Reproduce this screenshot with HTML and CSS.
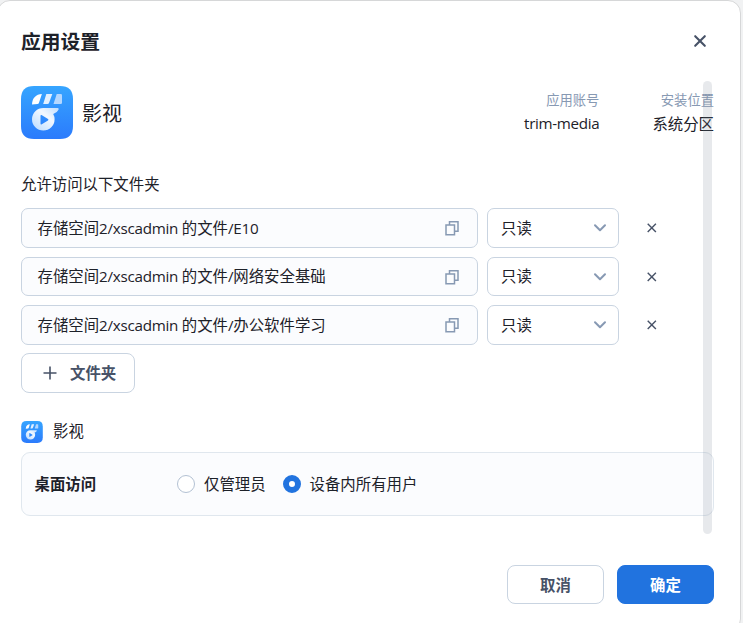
FILE: index.html
```html
<!DOCTYPE html>
<html lang="zh-CN">
<head>
<meta charset="utf-8">
<title>应用设置</title>
<link rel="stylesheet" href="styles.css">
</head>
<body>
<svg class="defs" width="0" height="0" aria-hidden="true">
  <defs>
    <linearGradient id="tile" x1="0" y1="0" x2="0" y2="1"><stop offset="0" stop-color="#36a5ff"/><stop offset="1" stop-color="#2b7bfc"/></linearGradient>
    <linearGradient id="disc" x1="1" y1="0" x2="0" y2="1"><stop offset="0" stop-color="#c0deff"/><stop offset=".4" stop-color="#f2f8ff"/><stop offset="1" stop-color="#b9daff"/></linearGradient>
    <symbol id="app" viewBox="0 0 52 53">
      <path fill="url(#tile)" d="M13 0H39Q52 0 52 13V40Q52 53 39 53H13Q0 53 0 40V13Q0 0 13 0Z"/>
      <path fill="#fff" d="M11 18.4C11.3 12 15 8.3 20.9 8L18 16.8Q17.6 18 16.5 18Z"/>
      <path fill="#e2f0ff" d="M25.3 8H31.3L28 17Q27.6 18 26.5 18H22.2Z"/>
      <path fill="#b4d7ff" d="M35.7 8H39.7Q41 8 41 9.3V16.7Q41 18 39.7 18H32.5Z"/>
      <path fill="url(#disc)" fill-rule="evenodd" d="M22.3 22H36.7Q38.3 22.2 37.5 23.8Q36 27 32.2 28Q33.6 30.5 33.6 33.3A11.3 11.3 0 1 1 22.3 22ZM20.5 29Q19.5 28.5 19.5 30V37.4Q19.5 38.9 20.8 38.2L27 34.4Q27.9 33.6 27 32.9Z"/>
    </symbol>
    <symbol id="copy" viewBox="0 0 15 16"><path fill="none" stroke="#8799b3" stroke-width="1.5" d="M1 5H9.5V14.8H1ZM4.5 5V1.7H13V11.3H9.5"/></symbol>
    <symbol id="chev" viewBox="0 0 14 10"><path fill="none" stroke="#8799b3" stroke-width="2" stroke-linecap="round" stroke-linejoin="round" d="M2 2.3 7 7.2 12 2.3"/></symbol>
    <symbol id="cross" viewBox="0 0 12 12"><path fill="none" stroke="#475267" stroke-width="1.4" stroke-linecap="square" d="M2.2 2.2 9.4 9.4M9.4 2.2 2.2 9.4"/></symbol>
  </defs>
</svg>
<main class="dialog">
  <header class="head">
    <h1>应用设置</h1>
    <button class="close" aria-label="关闭"><svg width="14" height="14" viewBox="0 0 14 14"><path fill="none" stroke="#475267" stroke-width="2.1" stroke-linecap="round" d="M2.2 2.2 11.8 11.8M11.8 2.2 2.2 11.8"/></svg></button>
  </header>
  <div class="body">
    <section class="app">
      <svg class="logo"><use href="#app"/></svg>
      <span class="name">影视</span>
      <dl class="meta">
        <div><dt>应用账号</dt><dd class="latin">trim-media</dd></div>
        <div><dt>安装位置</dt><dd>系统分区</dd></div>
      </dl>
    </section>
    <p class="caption">允许访问以下文件夹</p>
    <div class="rows">
      <div class="row">
        <div class="field"><span>存储空间<span class="lat">2/xscadmin </span>的文件<span class="lat">/E10</span></span><svg class="copy"><use href="#copy"/></svg></div>
        <div class="select"><span>只读</span><svg class="chev"><use href="#chev"/></svg></div>
        <svg class="remove"><use href="#cross"/></svg>
      </div>
      <div class="row short">
        <div class="field"><span>存储空间<span class="lat">2/xscadmin </span>的文件<span class="lat">/</span>网络安全基础</span><svg class="copy"><use href="#copy"/></svg></div>
        <div class="select"><span>只读</span><svg class="chev"><use href="#chev"/></svg></div>
        <svg class="remove"><use href="#cross"/></svg>
      </div>
      <div class="row">
        <div class="field"><span>存储空间<span class="lat">2/xscadmin </span>的文件<span class="lat">/</span>办公软件学习</span><svg class="copy"><use href="#copy"/></svg></div>
        <div class="select"><span>只读</span><svg class="chev"><use href="#chev"/></svg></div>
        <svg class="remove"><use href="#cross"/></svg>
      </div>
    </div>
    <button class="add"><svg width="14" height="14" viewBox="0 0 14 14"><path fill="none" stroke="#475267" stroke-width="1.6" d="M7 .5V13.5M.5 7H13.5"/></svg><span>文件夹</span></button>
    <div class="subhead"><svg class="logo-small"><use href="#app"/></svg><span>影视</span></div>
    <section class="card">
      <strong>桌面访问</strong>
      <span class="option"><i class="radio"></i><span>仅管理员</span></span>
      <span class="option"><i class="radio on"></i><span>设备内所有用户</span></span>
    </section>
    <div class="scrollbar"></div>
  </div>
  <footer class="foot">
    <button class="btn">取消</button>
    <button class="btn primary">确定</button>
  </footer>
</main>
</body>
</html>
```
FILE: styles.css
```css
* { box-sizing: border-box; }
body {
  margin: 0;
  height: 623px;
  overflow: hidden;
  background: #f1f2f3;
  color: #1d2129;
  font: 15.4px/22px "Noto Sans CJK SC", sans-serif;
}
h1, p, dl, dd { margin: 0; }
button { font: inherit; padding: 0; }
svg { display: block; flex: none; }
.defs { position: absolute; }
.dialog {
  width: 744px;
  height: 632px;
  margin-left: -3px;
  padding: 0 26px 0 23px;
  background: #fff;
  border: 1px solid #d6d7d8;
  border-radius: 13px;
}
.head {
  display: flex;
  align-items: center;
  justify-content: space-between;
  height: 80px;
}
h1 { font-size: 19.8px; line-height: 28px; font-weight: 700; }
.close { border: 0; background: none; margin: 0 7px 1px 0; }
.body { position: relative; height: 453px; }
.scrollbar {
  position: absolute;
  top: 0;
  right: 2px;
  width: 9px;
  height: 453px;
  border-radius: 5px;
  background: rgba(120, 135, 150, .18);
}
.app { display: flex; align-items: center; padding-top: 5px; height: 58px; }
.logo { width: 52px; height: 53px; }
.name { margin-left: 9px; font-size: 20px; }
.meta { display: flex; gap: 53px; margin: 0 0 3px auto; text-align: right; }
dt { color: #8799b3; font-size: 13.3px; line-height: 24px; }
dd { line-height: 22px; }
.latin, .lat { font-family: "Open Sans", sans-serif; font-size: 15.2px; letter-spacing: -.26px; }
.latin { line-height: 23px; letter-spacing: -.32px; }
.lat { white-space: pre; line-height: 1; }
.caption { margin-top: 33px; }
.rows { display: grid; gap: 9px; margin-top: 14px; }
.row { display: flex; align-items: center; height: 40px; }
.row.short { height: 39px; }
.field, .select {
  display: flex;
  align-items: center;
  justify-content: space-between;
  height: 100%;
  border: 1px solid #c9d4e1;
  border-radius: 7px;
}
.field { width: 457px; padding: 0 17px 0 16px; background: #fbfcfe; line-height: 20px; }
.field > span { margin-bottom: 2px; margin-left: -.5px; }
.short .field > span { margin-bottom: 3px; }
.select { width: 132px; margin-left: 9px; padding: 0 11px 0 13px; line-height: 20px; }
.select span { margin-bottom: 2px; }
.short .select span { margin-bottom: 3px; }
.copy { width: 15px; height: 16px; }
.chev { width: 14px; height: 10px; }
.remove { width: 12px; height: 12px; margin-left: 27px; }
.add {
  display: flex;
  align-items: center;
  gap: 13px;
  width: 114px;
  height: 40px;
  margin-top: 8px;
  padding-left: 21px;
  border: 1px solid #c9d4e1;
  border-radius: 8px;
  background: #fff;
  color: #475267;
  font-weight: 700;
}
.add span { margin-bottom: 2px; }
.subhead { display: flex; align-items: center; gap: 10px; height: 22px; margin-top: 28px; }
.subhead span { margin-bottom: 4px; }
.logo-small { width: 22px; height: 22px; }
.card {
  display: flex;
  align-items: center;
  height: 64px;
  margin-top: 9px;
  padding-left: 12.5px;
  border: 1px solid #e0e7ee;
  border-radius: 9px;
  background: #fbfcfe;
}
.card strong { width: 142.5px; margin-bottom: 2px; }
.option { display: flex; align-items: center; gap: 9px; margin-right: 17px; }
.option span { margin-bottom: 2px; }
.radio { width: 18px; height: 18px; border: 1px solid #b3c1d3; border-radius: 50%; background: #fff; }
.radio.on { border: 6px solid #2173df; }
.foot { display: flex; justify-content: flex-end; gap: 13px; margin-top: 31px; }
.btn {
  width: 97px;
  height: 39px;
  padding-bottom: 2px;
  border: 1px solid #c9d4e1;
  border-radius: 8px;
  background: #fff;
  color: #475267;
  font-weight: 700;
}
.primary { border-color: #2173df; background: #2173df; color: #fff; }
```
